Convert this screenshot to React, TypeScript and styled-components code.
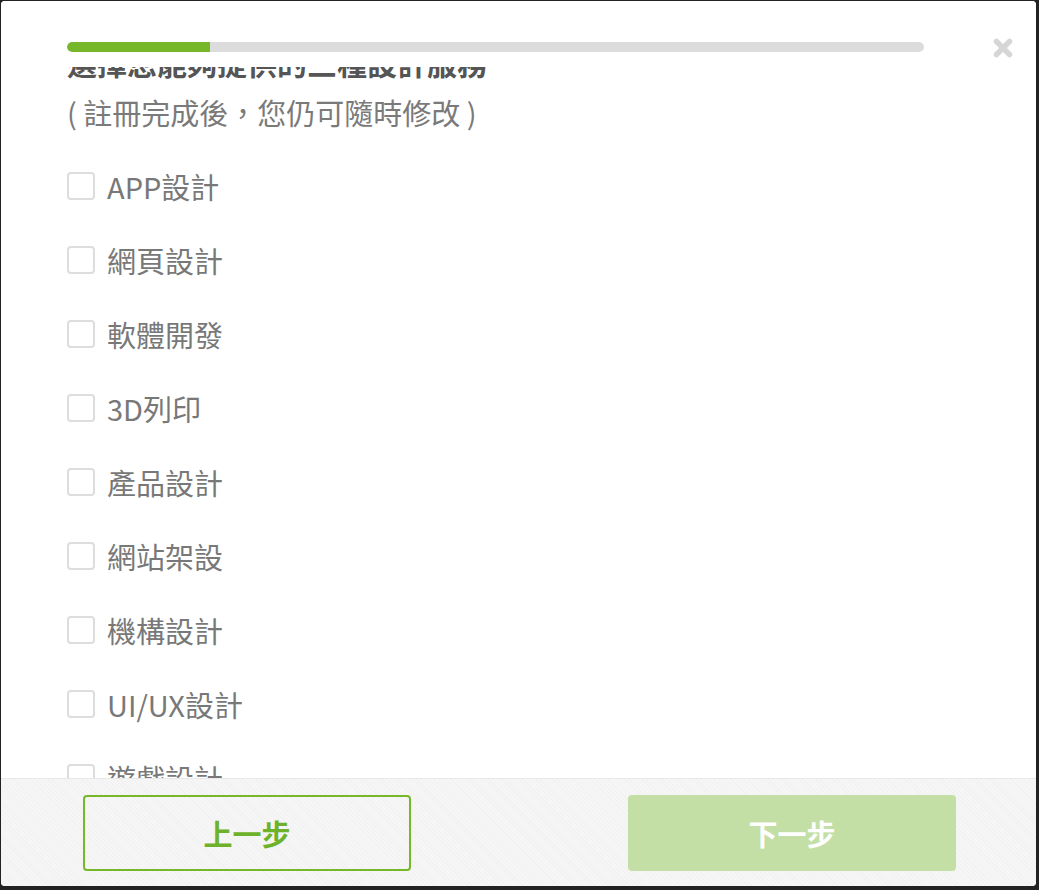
import React, { useLayoutEffect, useRef } from "react";
import styled, { createGlobalStyle } from "styled-components";

const Global = createGlobalStyle`
  html, body { margin: 0; padding: 0; background: #222222; }
  body { font-family: "Noto Sans CJK TC", "Noto Sans", sans-serif; }
  #root { padding: 1px 3px 4px 1px; }
`;

const Modal = styled.div`
  width: 1035px;
  height: 885px;
  background: #ffffff;
  border-radius: 4px;
  display: flex;
  flex-direction: column;
  overflow: hidden;
`;

const Header = styled.div`
  height: 66px;
  flex: none;
  display: flex;
  align-items: flex-start;
  padding: 0 23px 0 66px;
  gap: 69px;
  background: #ffffff;
`;

const Track = styled.div`
  flex: 1;
  height: 10px;
  margin-top: 41px;
  border-radius: 5px;
  background: #dcdcdc;
  overflow: hidden;
`;

const Fill = styled.div`
  height: 100%;
  background: #77b82a;
  border-radius: 5px 0 0 5px;
`;

const Close = styled.button`
  width: 20px;
  height: 20px;
  margin-top: 37px;
  padding: 0;
  border: none;
  background: none;
  display: flex;
  cursor: pointer;
`;

const Scroll = styled.div`
  flex: 1;
  overflow-y: auto;
  scrollbar-width: none;
  padding-left: 66px;
  &::-webkit-scrollbar { display: none; }
`;

const Title = styled.div`
  font-size: 30px;
  line-height: 40px;
  font-weight: 700;
  color: #555555;
`;

const Sub = styled.div`
  margin-top: 10px;
  font-size: 29px;
  line-height: 40px;
  color: #7a7a7a;
  white-space: pre;
`;

const List = styled.div`
  margin-top: 17px;
  display: flex;
  flex-direction: column;
`;

const Row = styled.label`
  height: 74px;
  display: flex;
  align-items: center;
  gap: 12px;
  cursor: pointer;
`;

const Box = styled.span`
  width: 28px;
  height: 28px;
  box-sizing: border-box;
  border: 2px solid #dddddd;
  border-radius: 4px;
  background: #ffffff;
  flex: none;
`;

const Label = styled.span`
  font-size: 29px;
  line-height: 40px;
  color: #787878;
`;

const Footer = styled.div`
  height: 108px;
  flex: none;
  box-sizing: border-box;
  border-top: 1px solid #e8e8e8;
  background-color: #f6f6f6;
  background-image: repeating-linear-gradient(
    45deg,
    rgba(0, 0, 0, 0.018) 0px,
    rgba(0, 0, 0, 0.018) 1px,
    transparent 1px,
    transparent 3px
  );
  display: flex;
  align-items: center;
  justify-content: space-between;
  padding: 0 80px 0 82px;
`;

const Btn = styled.button<{ $primary?: boolean }>`
  width: 328px;
  height: 76px;
  box-sizing: border-box;
  border-radius: 4px;
  font-family: "Noto Sans CJK TC", "Noto Sans", sans-serif;
  font-size: 29px;
  font-weight: 700;
  cursor: pointer;
  border: 2px solid ${(p) => (p.$primary ? "#c4dfa6" : "#77b82a")};
  background: ${(p) => (p.$primary ? "#c4dfa6" : "transparent")};
  color: ${(p) => (p.$primary ? "#ffffff" : "#6db22a")};
`;

const items = [
  "APP設計",
  "網頁設計",
  "軟體開發",
  "3D列印",
  "產品設計",
  "網站架設",
  "機構設計",
  "UI/UX設計",
  "遊戲設計",
  "平面設計",
  "硬體開發",
];

const step = 1;
const totalSteps = 6;

export default function App() {
  const ref = useRef<HTMLDivElement>(null);
  useLayoutEffect(() => {
    if (ref.current) ref.current.scrollTop = 25;
  }, []);
  return (
    <>
      <Global />
      <Modal>
        <Header>
          <Track>
            <Fill style={{ width: `${(step / totalSteps) * 100}%` }} />
          </Track>
          <Close aria-label="close">
            <svg width="20" height="20" viewBox="0 0 20 20">
              <path
                d="M3.5 3.5 L16.5 16.5 M16.5 3.5 L3.5 16.5"
                stroke="#d6d6d6"
                strokeWidth="5.5"
                strokeLinecap="round"
              />
            </svg>
          </Close>
        </Header>
        <Scroll ref={ref}>
          <Title>選擇您能夠提供的三種設計服務</Title>
          <Sub>( 註冊完成後，您仍可隨時修改 )</Sub>
          <List>
            {items.map((t) => (
              <Row key={t}>
                <Box />
                <Label>{t}</Label>
              </Row>
            ))}
          </List>
        </Scroll>
        <Footer>
          <Btn>上一步</Btn>
          <Btn $primary>下一步</Btn>
        </Footer>
      </Modal>
    </>
  );
}
